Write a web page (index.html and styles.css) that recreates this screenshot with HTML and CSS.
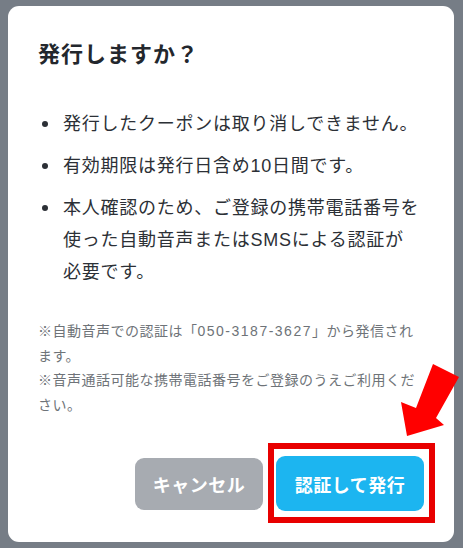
FILE: index.html
```html
<!DOCTYPE html>
<html lang="ja">
<head>
    <meta charset="UTF-8">
    <meta name="viewport" content="width=device-width, initial-scale=1.0">
    <title>発行しますか？</title>
    <link rel="stylesheet" href="styles.css">
</head>
<body>
    <div class="dialog">
        <h1 class="dialog-title">発行しますか？</h1>
        <ul class="points">
            <li><span>発行したクーポンは取り消しできません。</span></li>
            <li><span>有効期限は発行日含め10日間です。</span></li>
            <li><span>本人確認のため、ご登録の携帯電話番号を使った自動音声またはSMSによる認証が<br>必要です。</span></li>
        </ul>
        <div class="notes">
            <p>※自動音声での認証は「<span class="tel">050-3187-3627</span>」から発信されます。</p>
            <p>※音声通話可能な携帯電話番号をご登録のうえご利用ください。</p>
        </div>
        <div class="actions">
            <button class="btn btn-cancel">キャンセル</button>
            <button class="btn btn-primary">認証して発行</button>
        </div>
    </div>

    <!-- annotation overlay -->
    <div class="mark-box"></div>
    <svg class="mark-arrow" width="463" height="548" viewBox="0 0 463 548">
        <polygon points="433,364 459,377 436,418 444,425 407,436 401,402 416,408" fill="#ff0000"/>
    </svg>
</body>
</html>
```

FILE: styles.css
```css
body {
    margin: 0;
    padding: 6px 9px 6px 8px;
    background: #767d86;
    font-family: "Liberation Sans", "Noto Sans CJK JP", sans-serif;
    position: relative;
    height: 536px;
}
.dialog {
    background: #ffffff;
    border-radius: 11px;
    height: 536px;
    box-sizing: border-box;
    padding: 30px 30px 31px 30px;
    display: flex;
    flex-direction: column;
}
.dialog-title {
    margin: 3px 0 0;
    font-size: 22px;
    line-height: 32px;
    font-weight: 700;
    letter-spacing: 1px;
    color: #23272d;
}
.points {
    list-style: none;
    margin: 37px 0 0;
    padding: 0;
    display: flex;
    flex-direction: column;
    gap: 10px;
}
.points li {
    display: flex;
    font-size: 18px;
    line-height: 32px;
    letter-spacing: 0.75px;
    color: #2c3036;
}
.points li::before {
    content: "";
    flex-shrink: 0;
    width: 6px;
    height: 6px;
    border-radius: 50%;
    background: #2c3036;
    margin: 13px 15px 0 4px;
}
.notes {
    margin-top: 31px;
    font-size: 14px;
    line-height: 24.5px;
    letter-spacing: 0.5px;
    color: #6e7378;
}
.notes p {
    margin: 0;
}
.notes .tel {
    display: inline-block;
    letter-spacing: 1.5px;
}
.actions {
    margin-top: auto;
    display: flex;
    justify-content: flex-end;
    align-items: center;
    gap: 13px;
}
.btn {
    border: none;
    border-radius: 9px;
    color: #ffffff;
    font-family: inherit;
    font-size: 18px;
    font-weight: 700;
    letter-spacing: 0.5px;
    cursor: pointer;
}
.btn-cancel {
    width: 128px;
    height: 52px;
    background: #a7abb1;
}
.btn-primary {
    width: 148px;
    height: 55px;
    background: #1cb5f0;
}
.mark-box {
    position: absolute;
    left: 268px;
    top: 443px;
    width: 155px;
    height: 68px;
    border: 6px solid #e80000;
}
.mark-arrow {
    position: absolute;
    left: 0;
    top: 0;
}
```
